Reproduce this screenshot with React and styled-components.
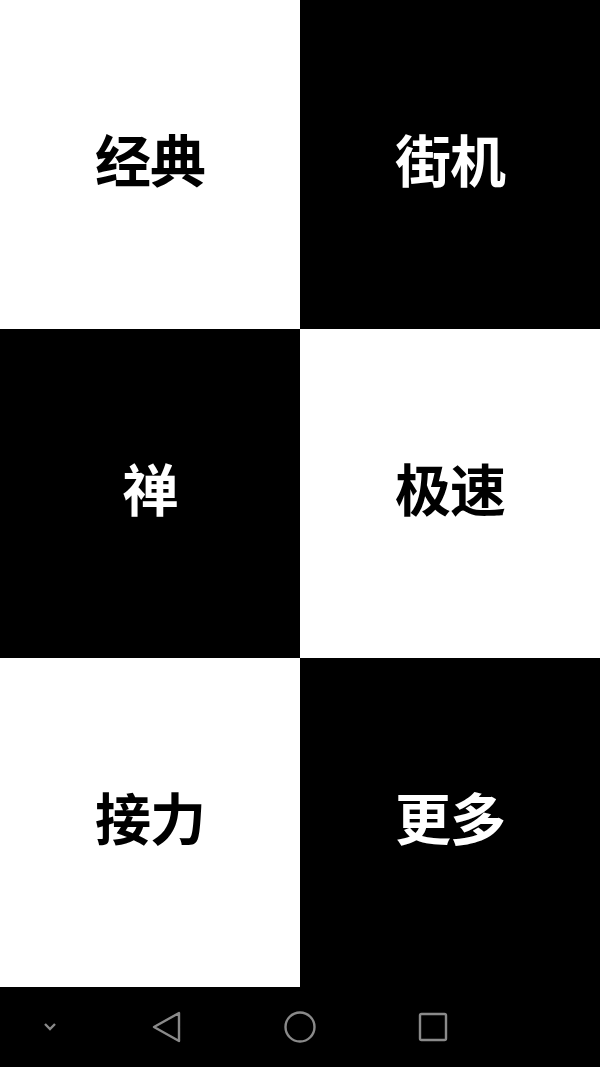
import React from "react";
import styled, { createGlobalStyle } from "styled-components";

const Global = createGlobalStyle`
  html, body { margin: 0; padding: 0; background: #000; }
  body { font-family: "Noto Sans CJK SC", "Noto Sans", sans-serif; }
`;

const Screen = styled.div`
  width: 600px;
  height: 1067px;
  display: flex;
  flex-direction: column;
  overflow: hidden;
`;

const Grid = styled.div`
  display: grid;
  grid-template-columns: 300px 300px;
  grid-template-rows: 329px 329px 329px;
`;

const Tile = styled.div`
  display: flex;
  align-items: center;
  justify-content: center;
  background: ${(p) => (p.$dark ? "#000" : "#fff")};
  color: ${(p) => (p.$dark ? "#fff" : "#000")};
  font-size: 56px;
  font-weight: 700;
  letter-spacing: -1px;
  padding-bottom: 14px;
  box-sizing: border-box;
`;

const NavBar = styled.div`
  height: 80px;
  background: #000;
  display: flex;
  align-items: center;
`;

const NavSlot = styled.div`
  width: ${(p) => p.$w}px;
  height: 100%;
  display: flex;
  align-items: center;
  justify-content: center;
`;

const tiles = [
  ["经典", false],
  ["街机", true],
  ["禅", true],
  ["极速", false],
  ["接力", false],
  ["更多", true],
];

const G = "#8a8a8a";

export default function App() {
  return (
    <Screen>
      <Global />
      <Grid>
        {tiles.map(([t, d]) => (
          <Tile key={t} $dark={d}>{t}</Tile>
        ))}
      </Grid>
      <NavBar>
        <NavSlot $w={100}>
          <svg width="16" height="12" viewBox="0 0 16 12">
            <path d="M3 3 L8 8 L13 3" fill="none" stroke={G} strokeWidth="2.4" />
          </svg>
        </NavSlot>
        <NavSlot $w={133}>
          <svg width="34" height="34" viewBox="0 0 34 34">
            <path d="M29 3 L29 31 L4 17 Z" fill="none" stroke={G} strokeWidth="2.4" strokeLinejoin="round" />
          </svg>
        </NavSlot>
        <NavSlot $w={133}>
          <svg width="34" height="34" viewBox="0 0 34 34">
            <circle cx="17" cy="17" r="14.5" fill="none" stroke={G} strokeWidth="2.4" />
          </svg>
        </NavSlot>
        <NavSlot $w={133}>
          <svg width="32" height="32" viewBox="0 0 32 32">
            <rect x="3" y="3" width="26" height="26" rx="1.5" fill="none" stroke={G} strokeWidth="2.4" />
          </svg>
        </NavSlot>
      </NavBar>
    </Screen>
  );
}
